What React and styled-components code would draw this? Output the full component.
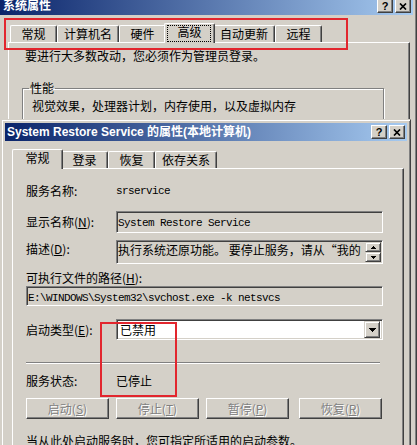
import React from 'react';
import styled, { createGlobalStyle } from 'styled-components';

const UI = `"Noto Sans CJK SC", "Noto Sans CJK JP", sans-serif`;
const MONO = `"Liberation Mono", "Noto Sans CJK SC", monospace`;
const FACE = '#d4d0c8';

const GlobalStyle = createGlobalStyle`
  html, body { margin: 0; padding: 0; background: ${FACE}; }
  body { width: 417px; height: 445px; overflow: hidden; font-family: ${UI}; font-size: 12px; color: #000; }
`;

const Desktop = styled.div`
  position: relative;
  width: 417px;
  height: 445px;
  overflow: hidden;
  background: ${FACE};
`;

const Window = styled.div`
  position: absolute;
  left: ${p => p.$left}px;
  top: ${p => p.$top}px;
  width: ${p => p.$width}px;
  height: ${p => p.$height}px;
  box-sizing: border-box;
  background: ${FACE};
  border: 1px solid;
  border-color: ${FACE} #404040 #404040 ${FACE};
  box-shadow: inset 1px 1px 0 #fff, inset -1px -1px 0 #808080;
  padding: 3px;
  display: flex;
  flex-direction: column;
`;

const TitleBar = styled.div`
  flex: none;
  height: 18px;
  display: flex;
  align-items: center;
  padding: 0 ${p => p.$pr}px 0 ${p => p.$pl}px;
  background: linear-gradient(to right, #0a246a, #a6caf0);
  color: #fff;
  font: bold 12px "Liberation Sans", "Noto Sans CJK SC", sans-serif;
  line-height: 18px;
  white-space: nowrap;
`;

const TitleText = styled.span`
  flex: 1;
  overflow: hidden;
`;

const CaptionButtons = styled.div`
  display: flex;
  gap: 2px;
`;

const CaptionButton = styled.div`
  width: 16px;
  height: 14px;
  box-sizing: border-box;
  background: ${FACE};
  border: 1px solid;
  border-color: #fff #404040 #404040 #fff;
  box-shadow: inset -1px -1px 0 #808080;
  display: flex;
  align-items: center;
  justify-content: center;
  color: #000;
  font: bold 11px "Liberation Sans", sans-serif;
  line-height: 12px;
`;

const Body = styled.div`
  flex: 1;
  min-height: 0;
  display: flex;
  flex-direction: column;
  padding: 8px ${p => p.$pr}px 0 ${p => p.$pl}px;
`;

const TabStrip = styled.div`
  flex: none;
  display: flex;
  align-items: flex-end;
  height: 20px;
  padding-left: 2px;
  margin-bottom: -1px;
  position: relative;
  z-index: 1;
`;

const Tab = styled.div`
  position: relative;
  z-index: ${p => (p.$active ? 2 : 1)};
  box-sizing: border-box;
  height: ${p => (p.$active ? 20 : 17)}px;
  min-width: ${p => (p.$active ? 51 : 47)}px;
  margin: ${p => (p.$active ? '0 -2px 0 -2px' : '0 0 1px 0')};
  padding: 1px 6px 0;
  background: ${FACE};
  border-top: 1px solid #fff;
  border-left: 1px solid #fff;
  border-right: 1px solid #404040;
  border-radius: 2px 2px 0 0;
  box-shadow: inset -1px 0 0 #808080;
  display: flex;
  justify-content: center;
  font-size: 12px;
  line-height: 14px;
  white-space: nowrap;

  ${p => p.$focus && `
    &::after {
      content: '';
      position: absolute;
      left: 2px; right: 3px; top: 1px; bottom: 1px;
      border: 1px dotted #000;
    }
  `}
`;

const Panel = styled.div`
  flex: 1;
  box-sizing: border-box;
  border: 1px solid;
  border-color: #fff #404040 #404040 #fff;
  box-shadow: inset -1px -1px 0 #808080;
  padding: ${p => p.$pad};
  display: flex;
  flex-direction: column;
  min-height: 0;
`;

const Line = styled.div`
  line-height: 16px;
  white-space: nowrap;
  margin-left: ${p => p.$ml || 0}px;
  margin-top: ${p => p.$mt || 0}px;
`;

const Group = styled.fieldset`
  margin: 16px 0 0 0;
  width: 362px;
  box-sizing: border-box;
  padding: 0 0 8px 6px;
  border: 1px solid #808080;
  box-shadow: inset 1px 1px 0 #fff, 1px 1px 0 #fff;
  min-inline-size: 0;
`;

const Legend = styled.legend`
  padding: 0 1px;
  line-height: 16px;
`;

const FormRow = styled.div`
  display: grid;
  grid-template-columns: 90px 1fr;
  align-items: ${p => p.$align || 'center'};
  margin-top: ${p => p.$mt || 0}px;
`;

const Label = styled.div`
  line-height: 16px;
  white-space: nowrap;
  margin-top: ${p => p.$mt || 0}px;
`;

const Mono = styled.span`
  font-family: ${MONO};
  font-size: 11px;
  letter-spacing: -0.6px;
  line-height: 14px;
  white-space: nowrap;
`;

const Field = styled.div`
  box-sizing: border-box;
  height: ${p => p.$h}px;
  background: ${p => (p.$white ? '#fff' : FACE)};
  border: 1px solid;
  border-color: #808080 #fff #fff #808080;
  box-shadow: inset 1px 1px 0 #404040, inset -1px -1px 0 ${FACE};
  display: flex;
  align-items: ${p => p.$valign || 'flex-start'};
  padding: ${p => p.$pad || '1px'};
  overflow: hidden;
  white-space: nowrap;
`;

const FieldText = styled.div`
  flex: 1;
  min-width: 0;
  overflow: hidden;
  line-height: 16px;
  padding-left: ${p => p.$pl || 0}px;
`;

const ScrollBar = styled.div`
  flex: none;
  width: 16px;
  align-self: stretch;
  display: flex;
  flex-direction: column;
`;

const Raised = styled.div`
  box-sizing: border-box;
  flex: ${p => (p.$grow ? 1 : 'none')};
  width: ${p => p.$w || 16}px;
  height: ${p => (p.$h ? `${p.$h}px` : 'auto')};
  background: ${FACE};
  border: 1px solid;
  border-color: ${FACE} #404040 #404040 ${FACE};
  box-shadow: inset 1px 1px 0 #fff, inset -1px -1px 0 #808080;
  display: flex;
  align-items: center;
  justify-content: center;
  svg { display: block; shape-rendering: crispEdges; }
`;

const Separator = styled.div`
  height: 1px;
  width: 354px;
  background: #808080;
  border-bottom: 1px solid #fff;
  margin-top: ${p => p.$mt}px;
`;

const ButtonRow = styled.div`
  display: flex;
  margin-top: ${p => p.$mt}px;
`;

const Button = styled.div`
  box-sizing: border-box;
  width: 83px;
  height: 21px;
  margin-left: ${p => p.$ml || 0}px;
  background: ${FACE};
  border: 1px solid;
  border-color: #fff #404040 #404040 #fff;
  box-shadow: inset -1px -1px 0 #808080;
  display: flex;
  align-items: center;
  justify-content: center;
  color: #808080;
  text-shadow: 1px 1px 0 #fff;
  line-height: 16px;
  white-space: nowrap;
`;

const Annotation = styled.div`
  position: absolute;
  left: ${p => p.$left}px;
  top: ${p => p.$top}px;
  width: ${p => p.$w}px;
  height: ${p => p.$h}px;
  box-sizing: border-box;
  border: 2px solid #e2262e;
  pointer-events: none;
`;

const Tri = ({ dir = 'down', w = 7, h = 4 }) => (
  <svg width={w} height={h} viewBox={`0 0 ${w} ${h}`}>
    <polygon
      points={dir === 'down' ? `0,0 ${w},0 ${w / 2},${h}` : `0,${h} ${w},${h} ${w / 2},0`}
      fill="#000"
    />
  </svg>
);

const CloseGlyph = () => (
  <svg width="8" height="7" viewBox="0 0 8 7">
    <path d="M1 0.5 L7 6.5 M7 0.5 L1 6.5" stroke="#000" strokeWidth="1.7" fill="none" />
  </svg>
);

const Caption = () => (
  <CaptionButtons>
    <CaptionButton>?</CaptionButton>
    <CaptionButton><CloseGlyph /></CaptionButton>
  </CaptionButtons>
);

export default function App() {
  return (
    <>
      <GlobalStyle />
      <Desktop>
        <Window $left={-4} $top={-7} $width={421} $height={470}>
          <TitleBar $pl={3} $pr={2}>
            <TitleText>系统属性</TitleText>
            <Caption />
          </TitleBar>
          <Body $pl={8} $pr={3}>
            <TabStrip>
              <Tab>常规</Tab>
              <Tab>计算机名</Tab>
              <Tab>硬件</Tab>
              <Tab $active $focus>高级</Tab>
              <Tab>自动更新</Tab>
              <Tab>远程</Tab>
            </TabStrip>
            <Panel $pad="5px 0 0 13px">
              <Line $ml={3}>要进行大多数改动，您必须作为管理员登录。</Line>
              <Group>
                <Legend>性能</Legend>
                <Line $ml={3} $mt={2}>视觉效果，处理器计划，内存使用，以及虚拟内存</Line>
              </Group>
            </Panel>
          </Body>
        </Window>

        <Window $left={1} $top={119} $width={410} $height={340}>
          <TitleBar $pl={2} $pr={2}>
            <TitleText>System Restore Service 的属性(本地计算机)</TitleText>
            <Caption />
          </TitleBar>
          <Body $pl={7} $pr={3}>
            <TabStrip>
              <Tab $active>常规</Tab>
              <Tab>登录</Tab>
              <Tab>恢复</Tab>
              <Tab>依存关系</Tab>
            </TabStrip>
            <Panel $pad="14px 20px 0 13px">
              <FormRow>
                <Label>服务名称:</Label>
                <Mono>srservice</Mono>
              </FormRow>
              <FormRow $mt={12}>
                <Label>显示名称(<u>N</u>):</Label>
                <Field $h={22}>
                  <FieldText><Mono>System Restore Service</Mono></FieldText>
                </Field>
              </FormRow>
              <FormRow $mt={7} $align="start">
                <Label $mt={1}>描述(<u>D</u>):</Label>
                <Field $h={24}>
                  <FieldText>执行系统还原功能。 要停止服务，请从“我的</FieldText>
                  <ScrollBar>
                    <Raised $grow><Tri dir="up" w={5} h={3} /></Raised>
                    <Raised $grow><Tri dir="down" w={5} h={3} /></Raised>
                  </ScrollBar>
                </Field>
              </FormRow>
              <Label $mt={6}>可执行文件的路径(<u>H</u>):</Label>
              <Field $h={20} $valign="center">
                <FieldText><Mono>E:\WINDOWS\System32\svchost.exe -k netsvcs</Mono></FieldText>
              </Field>
              <FormRow $mt={13}>
                <Label>启动类型(<u>E</u>):</Label>
                <Field $h={21} $white $valign="center" $pad="1px 2px 1px 1px">
                  <FieldText $pl={2}>已禁用</FieldText>
                  <Raised $h={17}><Tri /></Raised>
                </Field>
              </FormRow>
              <Separator $mt={22} />
              <FormRow $mt={9}>
                <Label>服务状态:</Label>
                <Label>已停止</Label>
              </FormRow>
              <ButtonRow $mt={9}>
                <Button>启动(<u>S</u>)</Button>
                <Button $ml={7}>停止(<u>T</u>)</Button>
                <Button $ml={7}>暂停(<u>P</u>)</Button>
                <Button $ml={10}>恢复(<u>R</u>)</Button>
              </ButtonRow>
              <Line $mt={14}>当从此处启动服务时，您可指定所适用的启动参数。</Line>
            </Panel>
          </Body>
        </Window>

        <Annotation $left={4} $top={18} $w={344} $h={32} />
        <Annotation $left={100} $top={322} $w={77} $h={75} />
      </Desktop>
    </>
  );
}
